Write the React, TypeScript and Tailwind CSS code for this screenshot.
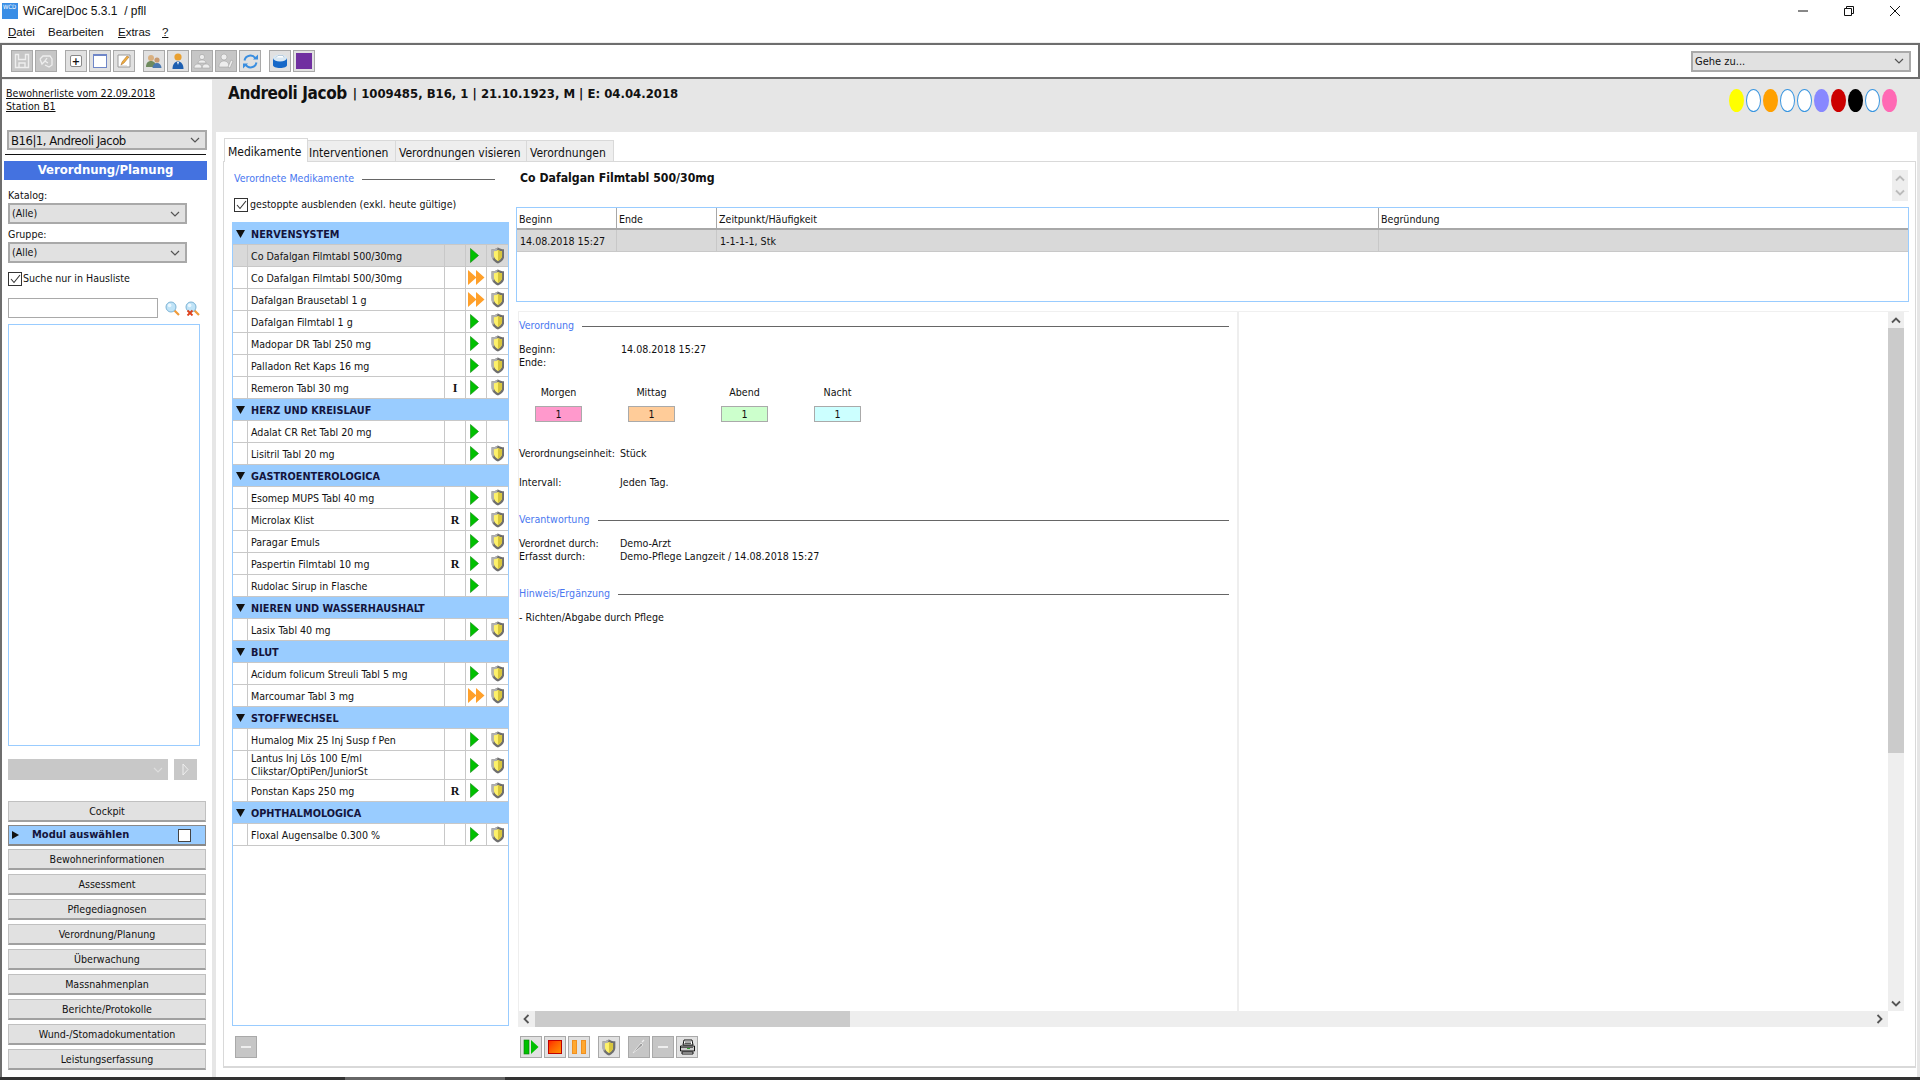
import React from "react";

const bandGroups = [
  { title: "NERVENSYSTEM", rows: [
    { name: "Co Dafalgan Filmtabl 500/30mg", play: "g", shield: true, active: true },
    { name: "Co Dafalgan Filmtabl 500/30mg", play: "o", shield: true },
    { name: "Dafalgan Brausetabl 1 g", play: "o", shield: true },
    { name: "Dafalgan Filmtabl 1 g", play: "g", shield: true },
    { name: "Madopar DR Tabl 250 mg", play: "g", shield: true },
    { name: "Palladon Ret Kaps 16 mg", play: "g", shield: true },
    { name: "Remeron Tabl 30 mg", mark: "I", play: "g", shield: true },
  ] },
  { title: "HERZ UND KREISLAUF", rows: [
    { name: "Adalat CR Ret Tabl 20 mg", play: "g", shield: false },
    { name: "Lisitril Tabl 20 mg", play: "g", shield: true },
  ] },
  { title: "GASTROENTEROLOGICA", rows: [
    { name: "Esomep MUPS Tabl 40 mg", play: "g", shield: true },
    { name: "Microlax Klist", mark: "R", play: "g", shield: true },
    { name: "Paragar Emuls", play: "g", shield: true },
    { name: "Paspertin Filmtabl 10 mg", mark: "R", play: "g", shield: true },
    { name: "Rudolac Sirup in Flasche", play: "g", shield: false },
  ] },
  { title: "NIEREN UND WASSERHAUSHALT", rows: [
    { name: "Lasix Tabl 40 mg", play: "g", shield: true },
  ] },
  { title: "BLUT", rows: [
    { name: "Acidum folicum Streuli Tabl 5 mg", play: "g", shield: true },
    { name: "Marcoumar Tabl 3 mg", play: "o", shield: true },
  ] },
  { title: "STOFFWECHSEL", rows: [
    { name: "Humalog Mix 25 Inj Susp f Pen", play: "g", shield: true },
    { name: "Lantus Inj Lös 100 E/ml Clikstar/OptiPen/JuniorSt", play: "g", shield: true, tall: true },
    { name: "Ponstan Kaps 250 mg", mark: "R", play: "g", shield: true },
  ] },
  { title: "OPHTHALMOLOGICA", rows: [
    { name: "Floxal Augensalbe 0.300 %", play: "g", shield: true },
  ] },
];

const navItems = ["Bewohnerinformationen", "Assessment", "Pflegediagnosen", "Verordnung/Planung", "Überwachung", "Massnahmenplan", "Berichte/Protokolle", "Wund-/Stomadokumentation", "Leistungserfassung"];

const dots = ["bg-[#ffff00]", "bg-white border border-[#3a96e0]", "bg-[#ffa000]", "bg-white border border-[#3a96e0]", "bg-white border border-[#3a96e0]", "bg-[#8888ff]", "bg-[#cc0000]", "bg-black", "bg-white border border-[#3a96e0]", "bg-[#ff69b4]"];

function Chevron({ color = "#555" }: { color?: string }) {
  return (
    <svg width="10" height="6" viewBox="0 0 10 6" fill="none"><path d="M1 1l4 4 4-4" stroke={color} strokeWidth="1.2" /></svg>
  );
}

function Combo({ text, className }: { text: string; className: string }) {
  return (
    <div className={"flex items-center justify-between border-2 border-[#a9a9a9] bg-[#e1e1e1] pl-[2px] pr-[5px] " + className}>
      <span className="leading-none">{text}</span>
      <Chevron />
    </div>
  );
}

function Check({ size = "w-[14px] h-[14px]" }: { size?: string }) {
  return (
    <div className={"flex items-center justify-center border border-[#333] bg-white shrink-0 " + size}>
      <svg width="11" height="10" viewBox="0 0 11 10" fill="none"><path d="M1 5l3 3.500L10 1" stroke="#333" strokeWidth="1.1" /></svg>
    </div>
  );
}

function Shield({ size = 17 }: { size?: number }) {
  return (
    <svg width={size * 0.82} height={size} viewBox="0 0 14 17">
      <path d="M7 .5C5 1.800 3 2.300.6 2.300v6.200c0 3.800 3 6.700 6.400 8 3.400-1.300 6.400-4.200 6.400-8V2.300C11 2.300 9 1.800 7 .5z" fill="#6f6f6f" />
      <path d="M7 .5C5 1.800 3 2.300.6 2.300v6.200c0 1.600.5 3 1.400 4.300L7 .5z" fill="#b0b0b0" />
      <path d="M7 3C5.600 3.800 4.300 4.200 2.900 4.300v4.300c0 2.500 1.900 4.500 4.100 5.500 2.200-1 4.100-3 4.100-5.500V4.300C9.700 4.200 8.400 3.800 7 3z" fill="#fdf16a" />
      <path d="M7 3c1.400.8 2.700 1.200 4.100 1.300v4.300c0 2.500-1.900 4.500-4.100 5.500z" fill="#d8c63c" />
    </svg>
  );
}

function Play() {
  return (
    <svg width="9" height="15" viewBox="0 0 9 15"><path d="M.5.5l8 7-8 7z" fill="#00c000" stroke="#0a8a0a" strokeWidth=".6" /></svg>
  );
}

function Forward() {
  return (
    <svg width="17" height="15" viewBox="0 0 17 15"><path d="M0 0l8.500 7.500L0 15zM8 0l8.500 7.500L8 15z" fill="#ffa02a" /></svg>
  );
}

function ToolBtn({ children, off }: { children?: React.ReactNode; off?: boolean }) {
  return (
    <div className={"flex items-center justify-center w-[22px] h-[22px] border border-[#a9a9a9] shrink-0 " + (off ? "bg-[#c6c6c6]" : "bg-[#e1e1e1]")}>
      {children}
    </div>
  );
}

function Lens({ cross }: { cross?: boolean }) {
  return (
    <svg width="15" height="15" viewBox="0 0 15 15">
      <path d="M9 9l5 5" stroke="#f09a3a" strokeWidth="2.2" />
      <circle cx="6" cy="6" r="5" fill="#bfe3f7" stroke="#7eb4d6" />
      <circle cx="4.600" cy="4.400" r="1.800" fill="#eaf7ff" />
      {cross && <path d="M2.500 9.500l5 5M7.500 9.500l-5 5" stroke="#e0401a" strokeWidth="1.8" />}
    </svg>
  );
}

function Heading({ text, lineClass }: { text: string; lineClass: string }) {
  return (
    <div className="flex items-center h-[14px]">
      <span className="text-[#4a78f0] whitespace-nowrap">{text}</span>
      <div className={"h-px bg-[#666] " + lineClass} />
    </div>
  );
}

function Dose({ label, color, text }: { label: string; color: string; text: string }) {
  return (
    <div className="flex flex-col items-center w-[47px] mr-[46px]">
      <span className="h-[14px] leading-[14px] whitespace-nowrap">{label}</span>
      <div className={"mt-[7px] w-[47px] h-[16px] leading-[14px] border border-[#aaa] text-center " + color}>{text}</div>
    </div>
  );
}

function MedRow({ row }: { row: any }) {
  return (
    <div className={"flex border-b border-[#c8c8c8] " + (row.tall ? "h-[29px] " : "h-[22px] ") + (row.active ? "bg-[#d9d9d9]" : "bg-white")}>
      <div className="w-[15px] border-r border-[#c8c8c8] shrink-0" />
      <div className={"flex-1 pl-[3px] border-r border-[#c8c8c8] flex items-center " + (row.tall ? "leading-[13px]" : "pt-[2px] whitespace-nowrap")}>{row.name}</div>
      <div className="w-[21px] border-r border-[#c8c8c8] flex items-center justify-center font-bold text-[12px] text-[#111] font-['Liberation_Serif',serif]">{row.mark}</div>
      <div className={"w-[21px] border-r border-[#c8c8c8] flex items-center " + (row.play === "g" ? "pl-[4px]" : "pl-[2px]")}>{row.play === "g" ? <Play /> : <Forward />}</div>
      <div className="w-[21px] flex items-center justify-center">{row.shield && <Shield />}</div>
    </div>
  );
}

export default function App() {
  return (
    <div className="w-[1920px] h-[1080px] flex flex-col overflow-hidden bg-white text-[10.6px] text-[#111] font-['DejaVu_Sans',sans-serif] font-stretch-condensed">
      {/* title bar */}
      <div className="h-[22px] flex items-center shrink-0 pl-[2px]">
        <div className="w-[16px] h-[16px] bg-[#3a8ee6] text-white text-[6px] leading-[8px] pl-[1px]">WCD</div>
        <span className="ml-[5px] text-[12px] font-stretch-normal font-['Liberation_Sans',sans-serif]">WiCare|Doc 5.3.1&nbsp; / pfll</span>
        <div className="ml-auto flex items-center">
          <div className="w-[46px] flex justify-center"><svg width="10" height="10" viewBox="0 0 10 10"><path d="M0 5h10" stroke="#111" /></svg></div>
          <div className="w-[46px] flex justify-center"><svg width="10" height="10" viewBox="0 0 10 10" fill="none"><path d="M.5 2.500h7v7h-7zM2.500 2.500v-2h7v7h-2" stroke="#111" /></svg></div>
          <div className="w-[46px] mr-[2px] flex justify-center"><svg width="10" height="10" viewBox="0 0 10 10"><path d="M0 0l10 10M10 0L0 10" stroke="#111" /></svg></div>
        </div>
      </div>
      {/* menu */}
      <div className="h-[21px] flex items-center shrink-0 pl-[8px] text-[11.5px] font-stretch-normal font-['Liberation_Sans',sans-serif]">
        <span className="w-[40px]"><u>D</u>atei</span>
        <span className="w-[70px]">Bearbeiten</span>
        <span className="w-[44px]"><u>E</u>xtras</span>
        <u>?</u>
      </div>
      {/* toolbar */}
      <div className="h-[36px] shrink-0 flex items-center border-y-2 border-x-2 border-[#6e6e6e] outline-1 outline-[#eee] pl-[9px] pr-[7px]">
        <div className="flex gap-[2px]">
          <ToolBtn off><svg width="16" height="16" viewBox="0 0 16 16" fill="none"><path d="M1.500 1.500h3v5h7v-5h3v13h-13zM5 14v-4h6v4" stroke="#eee" strokeWidth="1.4" /></svg></ToolBtn>
          <ToolBtn off><svg width="16" height="16" viewBox="0 0 16 16" fill="none"><path d="M2 6l3-3h7l2 3v6l-3 2-4-2M2 6l2 5 3-3M9 5l-2 3 3 2" stroke="#eee" strokeWidth="1.3" /></svg></ToolBtn>
        </div>
        <div className="flex gap-[2px] ml-[8px]">
          <ToolBtn><div className="w-[12px] h-[12px] border border-[#888] rounded-[2px] bg-white flex items-center justify-center font-bold text-[11px] leading-none">+</div></ToolBtn>
          <ToolBtn><div className="w-[14px] h-[14px] border border-[#6f86c8] border-t-2 bg-white" /></ToolBtn>
          <ToolBtn><svg width="16" height="16" viewBox="0 0 16 16"><path d="M2 2h12v12H2z" fill="#fff" stroke="#999" /><path d="M5 12l1-3 5-6 2 1-5 6z" fill="#f0b040" stroke="#a06020" strokeWidth=".5" /><path d="M4 13h7" stroke="#c8c8c8" /></svg></ToolBtn>
        </div>
        <div className="flex gap-[2px] ml-[8px]">
          <ToolBtn><svg width="18" height="16" viewBox="0 0 18 16"><circle cx="6" cy="5" r="3" fill="#d9b080" /><path d="M1 14c0-4 2-6 5-6s5 2 5 6z" fill="#6e8a5e" /><circle cx="12" cy="7" r="2.600" fill="#c89a70" /><path d="M7.500 15c0-3 2-5 4.500-5s4.500 2 4.500 5z" fill="#4a78b0" /></svg></ToolBtn>
          <ToolBtn><svg width="14" height="18" viewBox="0 0 14 18"><circle cx="7" cy="5" r="3.600" fill="#e8a030" /><path d="M1.500 17c0-5 2.500-7.500 5.500-7.500s5.500 2.500 5.500 7.500z" fill="#1e5fb0" /><path d="M6 10h2l-1 3z" fill="#fff" /></svg></ToolBtn>
          <ToolBtn off><svg width="18" height="16" viewBox="0 0 18 16" fill="#eee"><circle cx="9" cy="4" r="2.600" stroke="#999" strokeWidth=".5" /><path d="M5 10c0-2 2-3 4-3s4 1 4 3z" stroke="#999" strokeWidth=".5" /><path d="M1 15c0-3 2-4 4-4s4 1 4 4zM9 15c0-3 2-4 4-4s4 1 4 4z" stroke="#999" strokeWidth=".5" /></svg></ToolBtn>
          <ToolBtn off><svg width="18" height="16" viewBox="0 0 18 16" fill="#eee"><circle cx="7" cy="4" r="3" stroke="#999" strokeWidth=".5" /><path d="M2 14c0-4 2-6 5-6s5 2 5 6z" stroke="#999" strokeWidth=".5" /><path d="M11 14l3-7 2 1-3 7z" stroke="#999" strokeWidth=".5" /></svg></ToolBtn>
          <ToolBtn><svg width="17" height="17" viewBox="0 0 17 17" fill="none"><path d="M2.500 7.500a6 6 0 0 1 11-2" stroke="#3a8ee0" strokeWidth="2" /><path d="M14.500 9.500a6 6 0 0 1-11 2" stroke="#3a8ee0" strokeWidth="2" /><path d="M11 6.500h5v-5zM6 10.500H1v5z" fill="#3a8ee0" /></svg></ToolBtn>
        </div>
        <div className="flex gap-[2px] ml-[8px]">
          <ToolBtn><svg width="16" height="16" viewBox="0 0 16 16"><path d="M1 5h14v7c0 2-3 3-7 3s-7-1-7-3z" fill="#1668c8" /><ellipse cx="8" cy="5" rx="7" ry="3.500" fill="#d8e8f4" /><path d="M4 4.500l2-2h5l1 2" fill="#fff" stroke="#9cb4c8" strokeWidth=".6" /></svg></ToolBtn>
          <ToolBtn><div className="w-[16px] h-[16px] bg-[#7030a0]" /></ToolBtn>
        </div>
        <Combo text="Gehe zu..." className="ml-auto w-[220px] h-[21px] text-[11px]" />
      </div>

      {/* main */}
      <div className="flex-1 flex min-h-0">
        {/* sidebar */}
        <div className="w-[212px] shrink-0 flex flex-col border-l-2 border-[#6e6e6e] pl-[4px]">
          <div className="mt-[8px] leading-[13px] underline text-[#111]">Bewohnerliste vom 22.09.2018<br />Station B1</div>
          <Combo text="B16|1, Andreoli Jacob" className="mt-[17px] w-[200px] h-[20px] text-[13px] tracking-[-0.5px] ml-px" />
          <div className="mt-[4px] h-px w-[201px] bg-[#111] -ml-px" />
          <div className="mt-[6px] w-[203px] h-[19px] -ml-[2px] bg-[#4472e0] text-white font-bold text-[13px] leading-[18px] text-center">Verordnung/Planung</div>
          <div className="mt-[8px] ml-[2px] leading-[14px]">Katalog:</div>
          <Combo text="(Alle)" className="mt-px ml-[2px] w-[179px] h-[21px]" />
          <div className="mt-[3px] ml-[2px] leading-[14px]">Gruppe:</div>
          <Combo text="(Alle)" className="mt-px ml-[2px] w-[179px] h-[21px]" />
          <div className="mt-[9px] ml-[2px] flex items-center gap-[1px] h-[14px]"><Check /><span>Suche nur in Hausliste</span></div>
          <div className="mt-[12px] ml-[2px] flex items-center">
            <div className="w-[150px] h-[20px] border border-[#a9a9a9]" />
            <div className="ml-[7px] mt-[1px]"><Lens /></div>
            <div className="ml-[5px] mt-[1px]"><Lens cross /></div>
          </div>
          <div className="mt-[6px] ml-[2px] w-[192px] h-[422px] border border-[#99ccff]" />
          <div className="mt-[13px] ml-[2px] flex gap-[6px]">
            <div className="w-[160px] h-[21px] bg-[#c8c8c8] flex items-center justify-end pr-[5px]"><Chevron color="#ddd" /></div>
            <div className="w-[23px] h-[21px] bg-[#c8c8c8] flex items-center justify-center"><svg width="7" height="13" viewBox="0 0 7 13" fill="none"><path d="M1 1l5 5.500-5 5.500z" stroke="#eee" /></svg></div>
          </div>
          <div className="mt-[21px] ml-[2px] w-[198px] flex flex-col">
            <div className="h-[21px] border border-[#c0c0c0] border-b-2 border-b-[#a0a0a0] bg-[#e1e1e1] text-center leading-[18px]">Cockpit</div>
            <div className="mt-[3px] h-[21px] border border-[#888] border-b-2 bg-[#99ccff] flex items-center font-bold text-[11px]">
              <svg className="ml-[3px]" width="7" height="8" viewBox="0 0 7 8"><path d="M0 0l7 4-7 4z" fill="#111" /></svg>
              <span className="ml-[13px] text-[#14143c]">Modul auswählen</span>
              <div className="ml-auto mr-[14px] w-[13px] h-[13px] bg-white border border-[#444]" />
            </div>
            <div className="mt-[3px] flex flex-col gap-[4px]">
              {navItems.map((n) => (
                <div key={n} className="h-[21px] border border-[#c0c0c0] border-b-2 border-b-[#a0a0a0] bg-[#e1e1e1] text-center leading-[18px]">{n}</div>
              ))}
            </div>
          </div>
        </div>

        {/* content */}
        <div className="flex-1 flex flex-col bg-[#e6e6e6] min-w-0">
          <div className="h-[53px] shrink-0 flex pl-[16px] pr-[23px] pt-[4px]">
            <span className="font-bold text-[17px] tracking-[-0.4px] leading-[20px] text-[#111]">Andreoli Jacob</span>
            <span className="ml-[6px] font-bold text-[13px] leading-[21px]">| 1009485, B16, 1 | 21.10.1923, M | E: 04.04.2018</span>
            <div className="ml-auto mt-[6px] flex gap-[2px] h-[23px]">
              {dots.map((d, i) => <div key={i} className={"w-[15px] h-[23px] rounded-[50%] " + d} />)}
            </div>
          </div>
          <div className="flex-1 min-h-0 ml-[4px] mr-[3px] bg-white pl-[7px] pr-[1px] pt-[6px] pb-[9px] flex flex-col">
            {/* tabs */}
            <div className="h-[24px] shrink-0 flex items-end ml-px -mb-px text-[12px]">
              <div className="h-[24px] w-[84px] border border-b-0 border-[#d9d9d9] bg-white z-10 pl-[3px] leading-[26px]">Medikamente</div>
              <div className="h-[22px] w-[88px] bg-[#eeeeee] border-y border-r border-[#d9d9d9] pl-[1px] leading-[24px]">Interventionen</div>
              <div className="h-[22px] w-[131px] bg-[#eeeeee] border-y border-r border-[#d9d9d9] pl-[3px] leading-[24px]">Verordnungen visieren</div>
              <div className="h-[22px] w-[87px] bg-[#eeeeee] border-y border-r border-[#d9d9d9] pl-[3px] leading-[24px]">Verordnungen</div>
            </div>
            <div className="flex-1 min-h-0 flex border border-[#d9d9d9] border-b-2">
              {/* left column */}
              <div className="w-[292px] shrink-0 pl-[8px] pt-[10px] flex flex-col">
                <div className="ml-[2px]"><Heading text="Verordnete Medikamente" lineClass="ml-[8px] w-[133px]" /></div>
                <div className="mt-[12px] ml-[2px] flex items-center gap-[2px] h-[14px]"><Check /><span>gestoppte ausblenden (exkl. heute gültige)</span></div>
                <div className="mt-[10px] w-[277px] h-[804px] border border-[#99ccff] flex flex-col shrink-0">
                  {bandGroups.map((g) => (
                    <div key={g.title}>
                      <div className="h-[22px] bg-[#99ccff] flex items-center font-bold text-[10.8px] text-[#14143c] border-b border-[#c8c8c8]">
                        <svg className="ml-[3px]" width="9" height="8" viewBox="0 0 9 8"><path d="M0 0h9L4.500 8z" fill="#111" /></svg>
                        <span className="ml-[6px] pt-[3px]">{g.title}</span>
                      </div>
                      {g.rows.map((r, i) => <MedRow key={i} row={r} />)}
                    </div>
                  ))}
                </div>
                <div className="mt-[10px] ml-[3px]">
                  <ToolBtn off><div className="w-[10px] h-[2px] bg-[#eee]" /></ToolBtn>
                </div>
              </div>
              {/* right column */}
              <div className="flex-1 min-w-0 flex flex-col pt-[8px] pr-[6px]">
                <div className="flex h-[37px] shrink-0">
                  <span className="ml-[4px] font-bold text-[12.2px] leading-[16px]">Co Dafalgan Filmtabl 500/30mg</span>
                  <div className="ml-auto mr-[1px] w-[16px] h-[31px] bg-[#eeeeee] flex flex-col items-center justify-around py-[2px]">
                    <svg width="10" height="7" viewBox="0 0 10 7" fill="none"><path d="M1 5.500l4-4 4 4" stroke="#bbb" strokeWidth="1.800" /></svg>
                    <svg width="10" height="7" viewBox="0 0 10 7" fill="none"><path d="M1 1.500l4 4 4-4" stroke="#bbb" strokeWidth="1.800" /></svg>
                  </div>
                </div>
                <div className="h-[95px] shrink-0 border border-[#99ccff]">
                  <div className="flex h-[22px] border-b-2 border-[#a8a8a8]">
                    <div className="w-[100px] border-r border-[#a8a8a8] pl-[2px] leading-[22px]">Beginn</div>
                    <div className="w-[100px] border-r border-[#a8a8a8] pl-[2px] leading-[22px]">Ende</div>
                    <div className="w-[662px] border-r border-[#a8a8a8] pl-[2px] leading-[22px]">Zeitpunkt/Häufigkeit</div>
                    <div className="flex-1 pl-[2px] leading-[22px]">Begründung</div>
                  </div>
                  <div className="flex h-[22px] bg-[#d9d9d9] border-b border-[#c8c8c8]">
                    <div className="w-[100px] border-r border-[#c8c8c8] pl-[3px] leading-[22px]">14.08.2018 15:27</div>
                    <div className="w-[100px] border-r border-[#c8c8c8]" />
                    <div className="w-[662px] border-r border-[#c8c8c8] pl-[3px] leading-[22px]">1-1-1-1, Stk</div>
                    <div className="flex-1" />
                  </div>
                </div>
                <div className="mt-[9px] ml-[2px] flex-1 min-h-0 flex flex-col">
                  <div className="flex-1 min-h-0 flex border-t border-[#f0f0f0]">
                    <div className="w-[721px] shrink-0 border-x border-[#eeeeee] border-r-2 pt-[7px] flex flex-col">
                      <div className="w-[710px]"><Heading text="Verordnung" lineClass="ml-[8px] flex-1" /></div>
                      <div className="mt-[10px] flex leading-[13px]"><div className="w-[102px]">Beginn:<br />Ende:</div><div>14.08.2018 15:27</div></div>
                      <div className="mt-[16px] ml-[16px] flex">
                        <Dose label="Morgen" color="bg-[#ff99cc]" text="1" />
                        <Dose label="Mittag" color="bg-[#ffcc99]" text="1" />
                        <Dose label="Abend" color="bg-[#ccffcc]" text="1" />
                        <Dose label="Nacht" color="bg-[#ccffff]" text="1" />
                      </div>
                      <div className="mt-[24px] flex leading-[14px]"><div className="w-[101px] whitespace-nowrap">Verordnungseinheit:</div><div>Stück</div></div>
                      <div className="mt-[15px] flex leading-[14px]"><div className="w-[101px]">Intervall:</div><div>Jeden Tag.</div></div>
                      <div className="mt-[24px] w-[710px]"><Heading text="Verantwortung" lineClass="ml-[8px] flex-1" /></div>
                      <div className="mt-[10px] flex leading-[13px]"><div className="w-[101px]">Verordnet durch:<br />Erfasst durch:</div><div>Demo-Arzt<br />Demo-Pflege Langzeit / 14.08.2018 15:27</div></div>
                      <div className="mt-[24px] w-[710px]"><Heading text="Hinweis/Ergänzung" lineClass="ml-[8px] flex-1" /></div>
                      <div className="mt-[10px] leading-[13px]">- Richten/Abgabe durch Pflege</div>
                    </div>
                    <div className="flex-1" />
                    <div className="w-[16px] mr-[5px] shrink-0 bg-[#eeeeee] flex flex-col items-center">
                      <div className="h-[16px] flex items-center"><svg width="10" height="7" viewBox="0 0 10 7" fill="none"><path d="M1 5.500l4-4 4 4" stroke="#555" strokeWidth="1.800" /></svg></div>
                      <div className="w-full h-[425px] bg-[#cbcbcb]" />
                      <div className="mt-auto h-[16px] flex items-center"><svg width="10" height="7" viewBox="0 0 10 7" fill="none"><path d="M1 1.500l4 4 4-4" stroke="#555" strokeWidth="1.800" /></svg></div>
                    </div>
                  </div>
                  <div className="h-[16px] shrink-0 bg-[#eeeeee] mr-[21px] flex items-center">
                    <div className="w-[17px] flex justify-center"><svg width="7" height="10" viewBox="0 0 7 10" fill="none"><path d="M5.500 1l-4 4 4 4" stroke="#555" strokeWidth="1.800" /></svg></div>
                    <div className="w-[315px] h-full bg-[#cbcbcb]" />
                    <div className="ml-auto w-[17px] flex justify-center"><svg width="7" height="10" viewBox="0 0 7 10" fill="none"><path d="M1.500 1l4 4-4 4" stroke="#555" strokeWidth="1.800" /></svg></div>
                  </div>
                  <div className="h-[39px] shrink-0 pt-[9px] flex">
                    <div className="flex gap-[2px] ml-[2px]">
                      <ToolBtn><svg width="16" height="16" viewBox="0 0 16 16"><rect x="1" y="1" width="5" height="14" fill="#00c000" stroke="#0a7a0a" strokeWidth=".6" /><path d="M8 1l7.500 7L8 15z" fill="#00c000" /></svg></ToolBtn>
                      <ToolBtn><div className="w-[14px] h-[14px] border border-[#c00000] bg-gradient-to-br from-[#ff2000] to-[#ff9000]" /></ToolBtn>
                      <ToolBtn><div className="flex gap-[4px]"><div className="w-[5px] h-[14px] bg-[#ffa830] border border-[#f09020]" /><div className="w-[5px] h-[14px] bg-[#ffa830] border border-[#f09020]" /></div></ToolBtn>
                    </div>
                    <div className="ml-[8px]"><ToolBtn><Shield size={17} /></ToolBtn></div>
                    <div className="flex gap-[2px] ml-[8px]">
                      <ToolBtn off><svg width="16" height="16" viewBox="0 0 16 16" fill="none"><path d="M2 14l3-4 5-6 2 2-6 5z" fill="#999" stroke="#eee" strokeWidth=".8" /><path d="M11 3l2-2" stroke="#eee" strokeWidth="1.200" /></svg></ToolBtn>
                      <ToolBtn off><div className="w-[10px] h-[2px] bg-[#eee]" /></ToolBtn>
                      <ToolBtn><svg width="17" height="16" viewBox="0 0 17 16"><path d="M5 1h8l1 5H4z" fill="#fff" stroke="#111" /><path d="M6 3h6M5.500 4.500h6.500" stroke="#111" strokeWidth=".7" /><path d="M1.500 7h14v5h-14z" fill="#ccc" stroke="#111" /><path d="M3 13h11v2H3z" fill="#fff" stroke="#111" /><path d="M8 9.500h3" stroke="#30a030" /><path d="M2 8.500h12" stroke="#111" strokeWidth=".6" /></svg></ToolBtn>
                    </div>
                  </div>
                </div>
              </div>
            </div>
          </div>
        </div>
      </div>
      {/* taskbar sliver */}
      <div className="h-[3px] shrink-0 flex bg-[#333]">
        <div className="w-[345px]" />
        <div className="w-[160px] bg-[#666]" />
      </div>
    </div>
  );
}
